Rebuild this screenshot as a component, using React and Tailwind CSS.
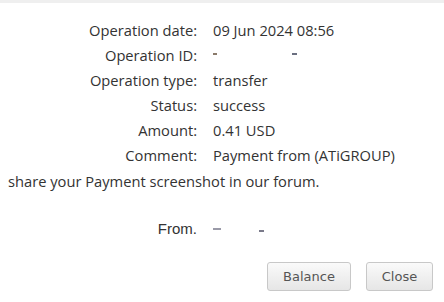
export default function App() {
    const rows = [
        ["Operation date:", "09 Jun 2024 08:56"],
        ["Operation ID:", null],
        ["Operation type:", "transfer"],
        ["Status:", "success"],
        ["Amount:", "0.41 USD"],
        ["Comment:", "Payment from (ATiGROUP)"],
    ];

    return (
        <div className="w-[444px] h-[302px] bg-white overflow-hidden text-[#333]" style={{ fontFamily: '"Open Sans", sans-serif' }}>
            <div className="h-[3px] bg-[#efefef]" />
            {/* details table */}
            <div className="grid grid-cols-[197px_1fr] gap-x-[16px] pt-[15px] text-[14.7px] leading-[25px]">
                {rows.map(([label, value]) => (
                    <div key={label} className="contents">
                        <div className="text-right">{label}</div>
                        <div>
                            {value ?? (
                                <span className="flex items-center h-[25px] gap-[75px]">
                                    <span className="w-[4px] h-[2px] bg-[#8a7a6a] -mt-[4px]" />
                                    <span className="w-[5px] h-[2px] bg-[#6a6f80] -mt-[4px]" />
                                </span>
                            )}
                        </div>
                    </div>
                ))}
            </div>
            <p className="pl-[8px] text-[14.7px] leading-[26px]">share your Payment screenshot in our forum.</p>

            <div className="grid grid-cols-[197px_1fr] gap-x-[16px] mt-[23px] text-[15px] leading-[24px]" style={{ fontFamily: '"Liberation Sans", Arial, sans-serif' }}>
                <div className="text-right">From.</div>
                <div className="flex items-center gap-[38px]">
                    <span className="w-[8px] h-[2px] bg-[#9a9aa8]" />
                    <span className="w-[5px] h-[2px] bg-[#7a7a8a] mt-[3px]" />
                </div>
            </div>

            <div className="flex justify-end gap-[15px] pr-[11px] mt-[21px]" style={{ fontFamily: '"DejaVu Sans", Verdana, sans-serif' }}>
                <button className="w-[84px] h-[29px] rounded-[3px] border border-[#c8c8c8] bg-gradient-to-b from-[#fafafa] to-[#e6e6e6] text-[#555] text-[13px]">
                    Balance
                </button>
                <button className="w-[67px] h-[29px] rounded-[3px] border border-[#c8c8c8] bg-gradient-to-b from-[#fafafa] to-[#e6e6e6] text-[#555] text-[13px]">
                    Close
                </button>
            </div>
        </div>
    );
}
